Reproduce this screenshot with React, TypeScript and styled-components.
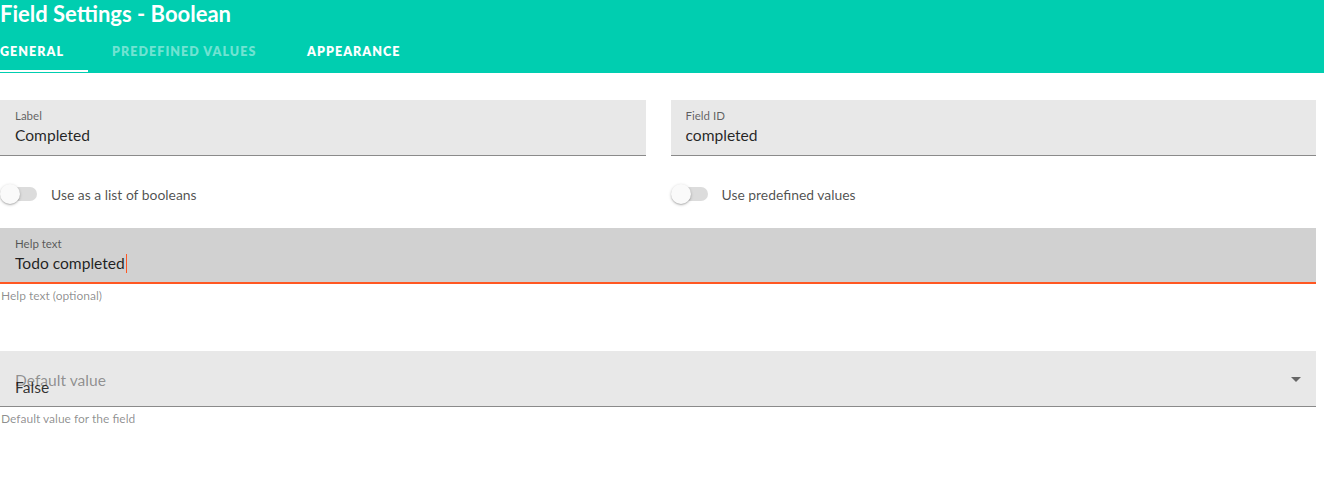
import React from "react";
import styled, { createGlobalStyle } from "styled-components";

const Global = createGlobalStyle`
  html, body { margin: 0; padding: 0; background: #fff; }
  body { font-family: "Lato", "Noto Sans", sans-serif; color: rgba(0,0,0,0.87); }
  * { box-sizing: border-box; }
`;

const Page = styled.div`
  width: 1324px;
  height: 500px;
  overflow: hidden;
  background: #fff;
`;

const Header = styled.header`
  background: #00ceb0;
  height: 73px;
  display: flex;
  flex-direction: column;
`;

const Title = styled.h1`
  margin: 0;
  height: 31px;
  padding-top: 0;
  font-size: 22px;
  line-height: 28px;
  font-weight: 700;
  color: #fff;
`;

const Tabs = styled.nav`
  display: flex;
  height: 42px;
`;

const Tab = styled.div<{ $w: number; $gap: number; $active?: boolean; $dim?: boolean }>`
  width: ${(p) => p.$w}px;
  margin-right: ${(p) => p.$gap}px;
  display: flex;
  align-items: center;
  white-space: nowrap;
  font-size: 12.5px;
  font-weight: 800;
  letter-spacing: 1.05px;
  text-transform: uppercase;
  padding-top: 1px;
  color: ${(p) => (p.$dim ? "rgba(255,255,255,0.45)" : "#fff")};
  border-bottom: 2px solid ${(p) => (p.$active ? "#fff" : "transparent")};
  height: 41px;
`;

const Body = styled.main`
  padding: 27px 8px 0 0;
  display: flex;
  flex-direction: column;
`;

const Row = styled.div`
  display: grid;
  grid-template-columns: 1fr 1fr;
  column-gap: 25px;
`;

const Field = styled.div<{ $focused?: boolean }>`
  height: 56px;
  background: ${(p) => (p.$focused ? "#d1d1d1" : "#e8e8e8")};
  border-bottom: ${(p) => (p.$focused ? "2px solid #ff5722" : "1px solid #8a8a8a")};
  padding: 9px 15px 0;
  display: flex;
  flex-direction: column;
  position: relative;
`;

const FieldLabel = styled.div`
  font-size: 11.5px;
  line-height: 14px;
  color: rgba(0,0,0,0.6);
`;

const FieldValue = styled.div`
  font-size: 15.6px;
  line-height: 24px;
  color: rgba(0,0,0,0.85);
  display: flex;
  align-items: center;
`;

const Caret = styled.span`
  display: inline-block;
  width: 1px;
  height: 19px;
  background: #ff5722;
  margin-left: 1px;
`;

const Helper = styled.div`
  font-size: 12px;
  line-height: 14px;
  color: rgba(0,0,0,0.45);
  padding: 5px 0 0 1px;
`;

const ToggleRow = styled.div`
  height: 72px;
  display: flex;
  align-items: center;
  gap: 14px;
  padding-top: 4px;
`;

const Switch = styled.div`
  position: relative;
  width: 36px;
  height: 14px;
  border-radius: 7px;
  background: #dcdcdc;
  margin-left: 1px;
`;

const Thumb = styled.span`
  position: absolute;
  left: -1px;
  top: -3px;
  width: 20px;
  height: 20px;
  border-radius: 50%;
  background: #fafafa;
  box-shadow: 0 1px 3px rgba(0,0,0,0.25), 0 1px 1px rgba(0,0,0,0.12);
`;

const ToggleText = styled.span`
  font-size: 13.9px;
  color: rgba(0,0,0,0.7);
`;

const Spacer = styled.div<{ $h: number }>`
  height: ${(p) => p.$h}px;
`;

const Placeholder = styled.div`
  position: absolute;
  left: 15px;
  top: 20px;
  font-size: 15.6px;
  color: rgba(0,0,0,0.4);
`;

const SelectValue = styled.div`
  position: absolute;
  left: 15px;
  top: 27px;
  font-size: 15.6px;
  color: rgba(0,0,0,0.8);
`;

const Arrow = styled.svg`
  position: absolute;
  right: 15px;
  top: 26px;
`;

function Toggle({ text }: { text: string }) {
  return (
    <ToggleRow>
      <Switch>
        <Thumb />
      </Switch>
      <ToggleText>{text}</ToggleText>
    </ToggleRow>
  );
}

export default function App() {
  return (
    <Page>
      <Global />
      <Header>
        <Title>Field Settings - Boolean</Title>
        <Tabs>
          <Tab $w={88} $gap={24} $active>General</Tab>
          <Tab $w={146} $gap={49} $dim>Predefined values</Tab>
          <Tab $w={100} $gap={0}>Appearance</Tab>
        </Tabs>
      </Header>
      <Body>
        <Row>
          <Field>
            <FieldLabel>Label</FieldLabel>
            <FieldValue>Completed</FieldValue>
          </Field>
          <Field>
            <FieldLabel>Field ID</FieldLabel>
            <FieldValue>completed</FieldValue>
          </Field>
        </Row>
        <Row>
          <Toggle text="Use as a list of booleans" />
          <Toggle text="Use predefined values" />
        </Row>
        <Field $focused>
          <FieldLabel>Help text</FieldLabel>
          <FieldValue>
            Todo completed
            <Caret />
          </FieldValue>
        </Field>
        <Helper>Help text (optional)</Helper>
        <Spacer $h={48} />
        <Field>
          <Placeholder>Default value</Placeholder>
          <SelectValue>False</SelectValue>
          <Arrow width="10" height="5" viewBox="0 0 10 5">
            <path d="M0 0 L10 0 L5 5 Z" fill="#666" />
          </Arrow>
        </Field>
        <Helper>Default value for the field</Helper>
      </Body>
    </Page>
  );
}
